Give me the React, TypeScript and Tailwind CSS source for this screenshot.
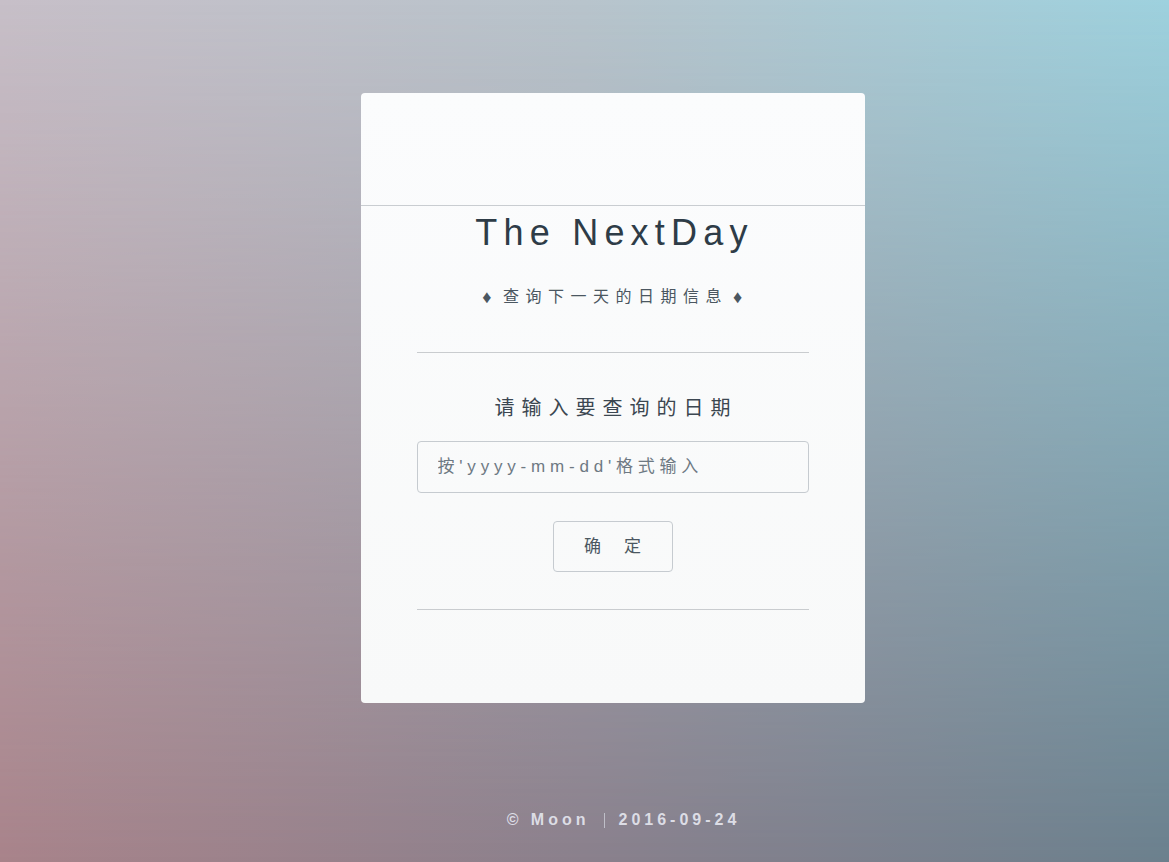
import React from "react";

export default function App() {
  return (
    <div className="relative w-full h-[862px] overflow-hidden bg-[linear-gradient(to_right,#c7bfc8,#b8c4cc_50%,#9ed1de)] font-['Liberation_Sans','Noto_Sans_CJK_SC',sans-serif]">
      <div className="absolute inset-0 bg-[linear-gradient(to_right,#a8838a,#8a808c_50%,#6b808d)] [mask-image:linear-gradient(to_bottom,transparent,black)]" />
      <div className="relative flex flex-col items-center pl-[56px]">
        <div className="mt-[93px] w-[504px] h-[610px] rounded-[4px] bg-[linear-gradient(to_bottom,#fbfcfd,#f8f9f9)] flex flex-col">
          <div className="h-[113px] border-b border-[#c9cdd1]" />
          <div className="px-[56px] flex flex-col items-center text-center">
            <div className="mt-[9px] text-[36px] leading-[36px] tracking-[6.2px] pl-[4px] text-[#2e3c47]">
              The NextDay
            </div>
            <div className="mt-[34px] text-[16px] leading-[24px] tracking-[6.5px] pl-[6px] text-[#4b5761] flex items-center">
              <span className="text-[18px] mr-[5px]">♦</span>
              <span>查询下一天的日期信息</span>
              <span className="text-[18px] ml-[5px]">♦</span>
            </div>
            <div className="mt-[43px] w-full h-px bg-[#c9cccf]" />
            <div className="mt-[41px] text-[20px] leading-[28px] tracking-[7px] pl-[7px] text-[#3c4751]">
              请输入要查询的日期
            </div>
            <input
              className="mt-[19px] w-full h-[52px] rounded-[4px] border border-[#c6cbd0] bg-transparent px-[20px] text-[17px] tracking-[4.8px] text-[#3c4751] placeholder:text-[#6e7983] outline-none"
              placeholder="按'yyyy-mm-dd'格式输入"
            />
            <button className="mt-[28px] w-[120px] h-[51px] rounded-[4px] border border-[#c6cbd0] bg-transparent flex items-center justify-center gap-[23px] text-[17px] text-[#4b5761]">
              <span>确</span>
              <span>定</span>
            </button>
            <div className="mt-[37px] w-full h-px bg-[#c9cccf]" />
          </div>
        </div>
        <div className="mt-[107px] ml-[22px] flex items-center text-[16px] leading-[20px] font-bold tracking-[4px] text-[#dcdde5]">
          <span>© Moon</span>
          <span className="mx-[14px] w-px h-[15px] bg-[#bfbfc8]" />
          <span>2016-09-24</span>
        </div>
      </div>
    </div>
  );
}
